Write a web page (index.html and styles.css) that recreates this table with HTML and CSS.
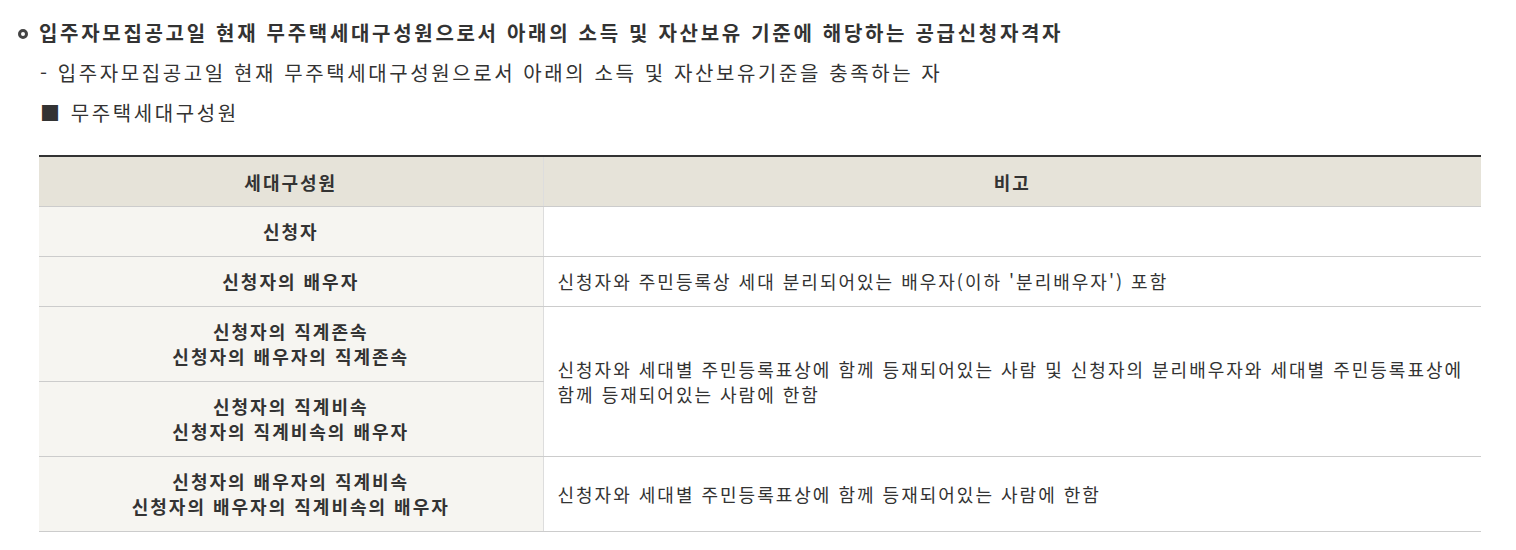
FILE: index.html
```html
<!DOCTYPE html>
<html lang="ko">
<head>
<meta charset="utf-8">
<link rel="stylesheet" href="styles.css">
</head>
<body>
<div class="page">
  <p class="title"><span class="ring"></span>입주자모집공고일 현재 무주택세대구성원으로서 아래의 소득 및 자산보유 기준에 해당하는 공급신청자격자</p>
  <p class="sub">- 입주자모집공고일 현재 무주택세대구성원으로서 아래의 소득 및 자산보유기준을 충족하는 자</p>
  <p class="sub">■ 무주택세대구성원</p>
  <table class="tbl">
    <colgroup><col class="c1"><col class="c2"></colgroup>
    <thead>
      <tr><th>세대구성원</th><th>비고</th></tr>
    </thead>
    <tbody>
      <tr class="r50"><td class="lab">신청자</td><td></td></tr>
      <tr class="r50"><td class="lab">신청자의 배우자</td><td>신청자와 주민등록상 세대 분리되어있는 배우자(이하 '분리배우자') 포함</td></tr>
      <tr class="r75"><td class="lab">신청자의 직계존속<br>신청자의 배우자의 직계존속</td><td rowspan="2">신청자와 세대별 주민등록표상에 함께 등재되어있는 사람 및 신청자의 분리배우자와 세대별 주민등록표상에 함께 등재되어있는 사람에 한함</td></tr>
      <tr class="r75"><td class="lab">신청자의 직계비속<br>신청자의 직계비속의 배우자</td></tr>
      <tr class="r75"><td class="lab">신청자의 배우자의 직계비속<br>신청자의 배우자의 직계비속의 배우자</td><td>신청자와 세대별 주민등록표상에 함께 등재되어있는 사람에 한함</td></tr>
    </tbody>
  </table>
</div>
</body>
</html>
```
FILE: styles.css
```css
html, body { margin: 0; padding: 0; background: #fff; }
body { font-family: "Noto Sans CJK KR", "Noto Sans", sans-serif; color: #333; }
.page { padding: 13px 35px 0 39px; }
.title { margin: 0; height: 40px; line-height: 40px; font-size: 20px; letter-spacing: 2.7px; font-weight: bold; color: #333; position: relative; }
.ring { position: absolute; left: -21px; top: 16px; width: 4px; height: 4px; border: 3px solid #444; border-radius: 50%; }
.sub { margin: 0; height: 40px; line-height: 40px; font-size: 20px; letter-spacing: 2.6px; color: #333; padding-left: 1px; }
.tbl { margin-top: 22px; width: 1442px; border-collapse: collapse; border-top: 2px solid #333; font-size: 18px; letter-spacing: 2px; }
.c1 { width: 504px; }
.tbl th { height: 49px; background: #e6e3d9; font-weight: bold; border-bottom: 1px solid #ccc; border-left: 1px solid #ddd; padding: 0; }
.tbl th:first-child { border-left: none; }
.tbl td { border-bottom: 1px solid #ccc; border-left: 1px solid #ddd; padding: 0 14px; line-height: 25px; }
.tbl td.lab { border-left: none; background: #f6f5f1; font-weight: bold; text-align: center; }
.r50 td { height: 49px; }
.r75 td { height: 74px; }
```
